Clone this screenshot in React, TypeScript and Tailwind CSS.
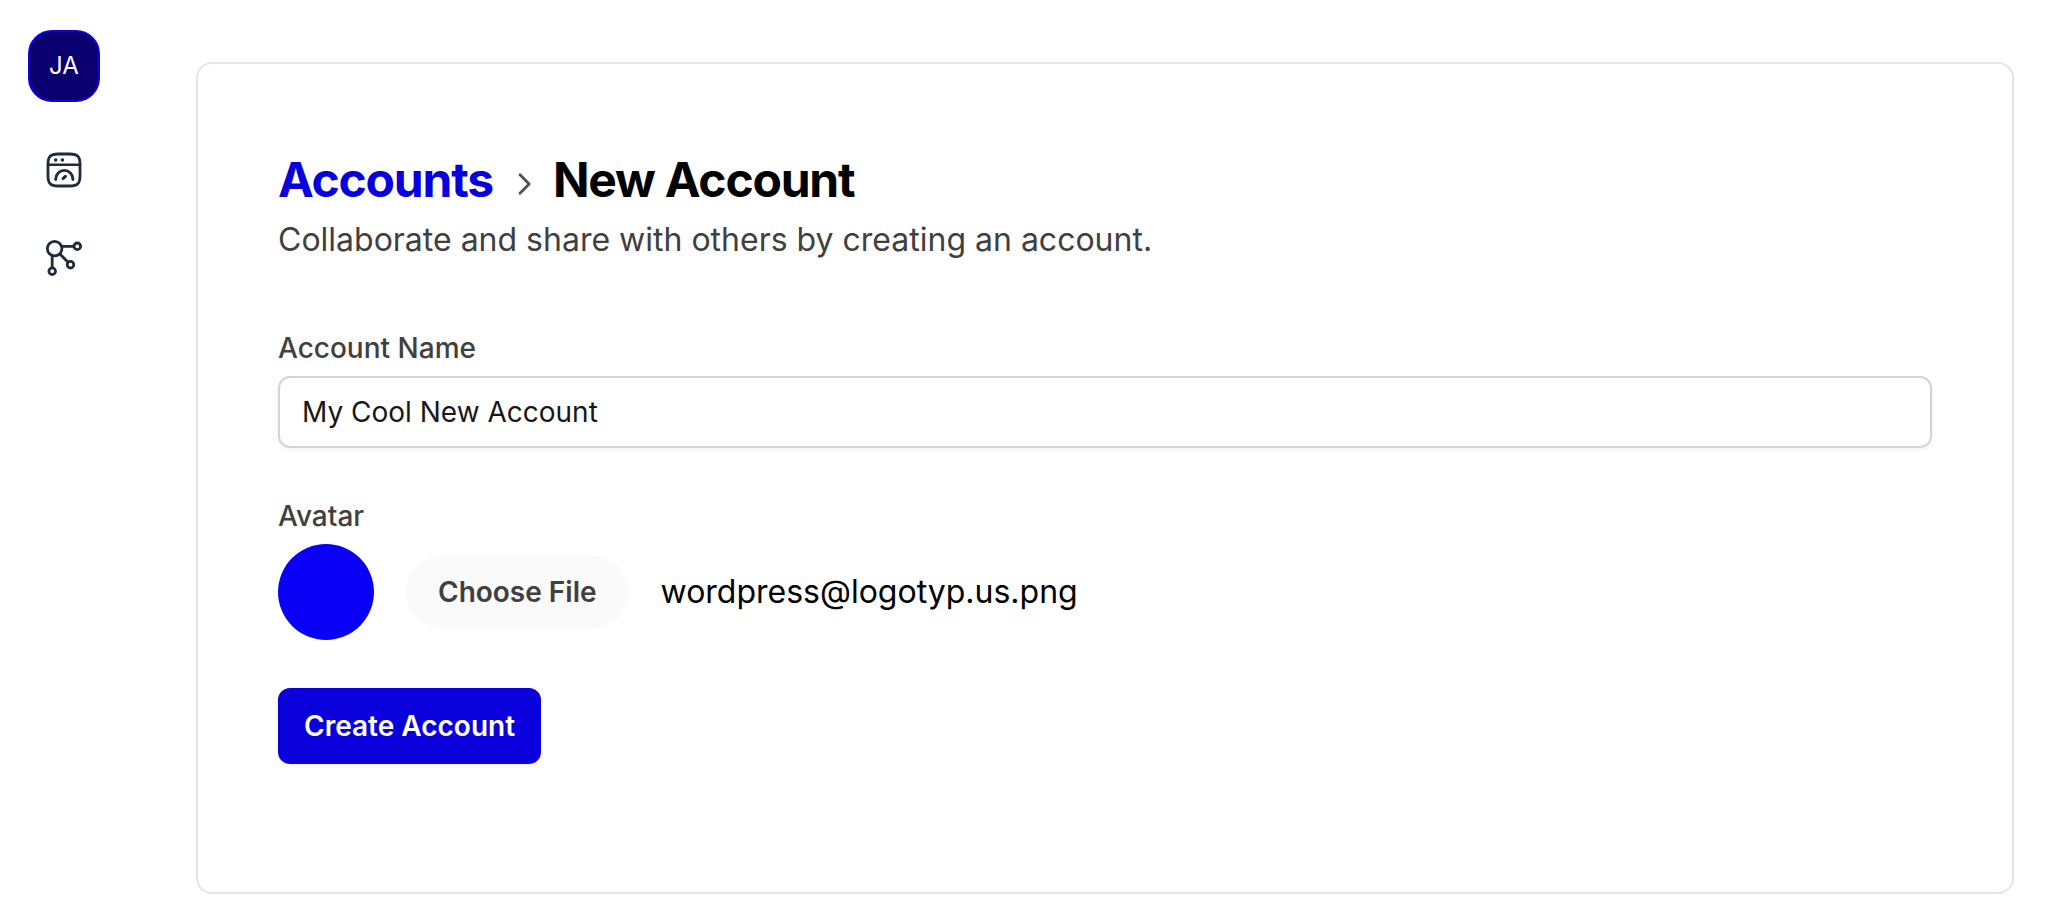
import { useRef, useState } from "react";

function DashboardIcon() {
  return (
    <svg className="size-10" viewBox="0 0 40 40" fill="none" stroke="currentColor" strokeWidth="2.8" strokeLinecap="round" aria-hidden="true">
      <path d="M14 4h12C33.5 4 36 6.500 36 14v12C36 33.500 33.500 36 26 36H14C6.500 36 4 33.500 4 26V14C4 6.500 6.500 4 14 4Z" />
      <path d="M4 14.8h32" strokeWidth="2.6" />
      <path d="M11.7 29.6v-.6a8.6 8.6 0 0 1 17.2 0v.6" strokeWidth="2.9" />
      <path d="M19 28.6l2.4-2.2" strokeWidth="3" />
      <circle cx="11.7" cy="10" r="1.8" fill="currentColor" stroke="none" />
      <circle cx="18.4" cy="10" r="1.8" fill="currentColor" stroke="none" />
    </svg>
  );
}

function NetworkIcon() {
  return (
    <svg className="size-10" viewBox="0 0 40 40" fill="none" stroke="currentColor" strokeWidth="2.8" aria-hidden="true">
      <circle cx="10.6" cy="10.6" r="7.3" />
      <circle cx="33.3" cy="8.3" r="3.3" />
      <circle cx="26.5" cy="26.7" r="3.3" />
      <circle cx="8.2" cy="33.2" r="3.3" />
      <path d="M17.8 8.3h12.1M15.9 15.9l8.2 8.4M8.2 17.7v12.1" />
    </svg>
  );
}

export default function App() {
  const fileInput = useRef<HTMLInputElement>(null);
  const [fileName, setFileName] = useState("wordpress@logotyp.us.png");

  return (
    <div className="flex min-h-screen bg-white font-['Inter',sans-serif] text-black antialiased">
      <nav aria-label="Main" className="flex w-32 shrink-0 flex-col items-center pt-[30px] text-[#1f2a3a]">
        <button type="button" className="flex size-18 items-center justify-center rounded-3xl border-2 border-[#0f00dc] bg-[#0a0070] text-2xl text-white">
          JA
        </button>
        <div className="mt-12 flex flex-col gap-12">
          <a href="#dashboard" aria-label="Dashboard"><DashboardIcon /></a>
          <a href="#network" aria-label="Network"><NetworkIcon /></a>
        </div>
      </nav>

      <main className="min-w-0 grow pt-[62px] pr-[58px] pb-6 pl-[68px]">
        <section className="rounded-2xl border-2 border-[#e5e5e5] p-20">
          <h1 className="flex items-center text-5xl/[72px] font-bold tracking-tight">
            <a href="#accounts" className="text-[#0a00dc]">Accounts</a>
            <svg className="mt-2 mr-2 ml-3 size-10 text-[#525252]" viewBox="0 0 24 24" fill="none" stroke="currentColor" strokeWidth="1.7" strokeLinecap="round" strokeLinejoin="round" aria-hidden="true">
              <path d="m9 17.5 5.5-5.5L9 6.5" />
            </svg>
            <span>New Account</span>
          </h1>
          <p className="text-[32px]/[48px] text-[#404040]">Collaborate and share with others by creating an account.</p>

          <form className="mt-16 flex flex-col gap-12 pb-12" onSubmit={(e) => e.preventDefault()}>
            <div className="flex flex-col gap-2">
              <label htmlFor="account-name" className="text-[28px]/[40px] font-medium text-[#404040]">Account Name</label>
              <input
                id="account-name"
                type="text"
                defaultValue="My Cool New Account"
                className="h-18 w-full rounded-xl border-2 border-[#d4d4d4] px-[22px] text-[28px]/[40px] text-[#171717] shadow-[0_2px_4px_rgb(0_0_0/0.05)]"
              />
            </div>

            <div className="flex flex-col gap-2">
              <label htmlFor="avatar" className="text-[28px]/[40px] font-medium text-[#404040]">Avatar</label>
              <div className="flex items-center gap-8">
                <div className="size-24 rounded-full bg-[#0a00f5]" />
                <input
                  ref={fileInput}
                  id="avatar"
                  type="file"
                  className="hidden"
                  onChange={(e) => setFileName(e.target.files?.[0]?.name ?? fileName)}
                />
                <button
                  type="button"
                  onClick={() => fileInput.current?.click()}
                  className="rounded-full bg-[#fafafa] px-8 py-4 text-[28px]/[40px] font-semibold text-[#404040]"
                >
                  Choose File
                </button>
                <span className="text-[32px]/[48px]">{fileName}</span>
              </div>
            </div>

            <button
              type="submit"
              className="self-start rounded-xl border-2 border-[#0a00dc] bg-[#0a00dc] px-6 py-4 text-[28px]/[40px] font-semibold text-white shadow-[0_2px_4px_rgb(0_0_0/0.05)]"
            >
              Create Account
            </button>
          </form>
        </section>
      </main>
    </div>
  );
}
